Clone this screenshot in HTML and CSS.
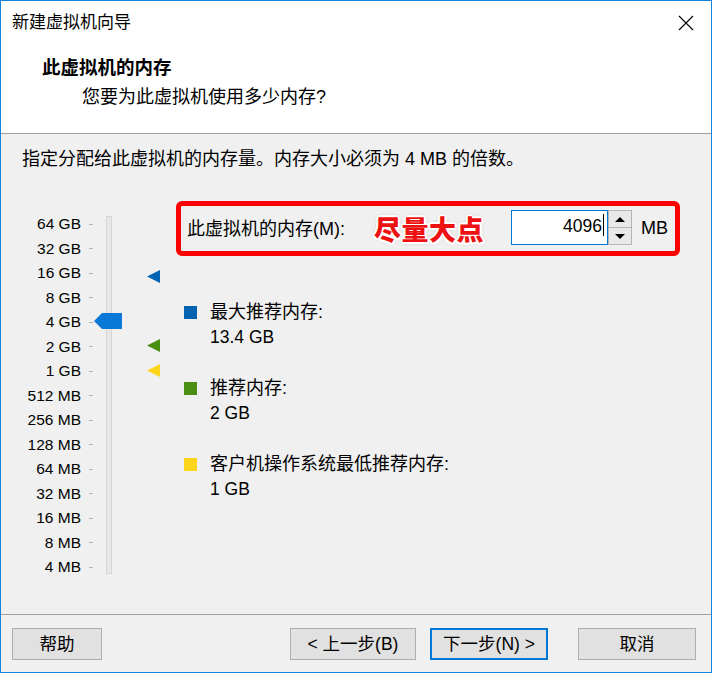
FILE: index.html
```html
<!DOCTYPE html>
<html lang="zh-CN">
<head>
    <meta charset="UTF-8">
    <title>新建虚拟机向导</title>
    <link rel="stylesheet" href="styles.css">
</head>
<body>
    <div class="window">
        <!-- Заголовок окна -->
        <div class="titlebar">
            <span class="title">新建虚拟机向导</span>
            <svg class="close" width="16" height="16" viewBox="0 0 16 16">
                <path d="M1 1 L15 15 M15 1 L1 15" stroke="#000" stroke-width="1.1" fill="none"/>
            </svg>
        </div>

        <div class="header">
            <div class="header-title">此虚拟机的内存</div>
            <div class="header-sub">您要为此虚拟机使用多少内存?</div>
        </div>

        <div class="content">
            <p class="intro">指定分配给此虚拟机的内存量。内存大小必须为 4 MB 的倍数。</p>

            <div class="main">
                <!-- Ползунок -->
                <div class="slider">
                    <div class="track"></div>
                    <span class="lbl">64 GB</span><span class="tick"></span>
                    <span class="lbl">32 GB</span><span class="tick"></span>
                    <span class="lbl">16 GB</span><span class="tick"></span>
                    <span class="lbl">8 GB</span><span class="tick"></span>
                    <span class="lbl">4 GB</span><span class="tick"></span>
                    <span class="lbl">2 GB</span><span class="tick"></span>
                    <span class="lbl">1 GB</span><span class="tick"></span>
                    <span class="lbl">512 MB</span><span class="tick"></span>
                    <span class="lbl">256 MB</span><span class="tick"></span>
                    <span class="lbl">128 MB</span><span class="tick"></span>
                    <span class="lbl">64 MB</span><span class="tick"></span>
                    <span class="lbl">32 MB</span><span class="tick"></span>
                    <span class="lbl">16 MB</span><span class="tick"></span>
                    <span class="lbl">8 MB</span><span class="tick"></span>
                    <span class="lbl">4 MB</span><span class="tick"></span>

                    <svg class="thumb" width="28" height="16" viewBox="0 0 28 16">
                        <path d="M0 8 L8 0 H28 V16 H8 Z" fill="#0a78d6"/>
                    </svg>
                    <svg class="marker marker-max" width="13" height="13" viewBox="0 0 13 13">
                        <path d="M0 6.5 L13 0 V13 Z" fill="#0063b1"/>
                    </svg>
                    <svg class="marker marker-rec" width="13" height="13" viewBox="0 0 13 13">
                        <path d="M0 6.5 L13 0 V13 Z" fill="#4a8f12"/>
                    </svg>
                    <svg class="marker marker-min" width="13" height="13" viewBox="0 0 13 13">
                        <path d="M0 6.5 L13 0 V13 Z" fill="#fcd419"/>
                    </svg>
                </div>

                <div class="panel">
                    <div class="mem-box">
                        <span class="mem-label">此虚拟机的内存(M):</span>
                        <span class="hint">尽量大点</span>
                        <div class="spin">
                            <div class="spin-input">4096<span class="caret"></span></div>
                            <div class="spin-btns">
                                <div class="spin-btn"><span class="arrow-up"></span></div>
                                <div class="spin-btn"><span class="arrow-down"></span></div>
                            </div>
                        </div>
                        <span class="unit">MB</span>
                    </div>

                    <div class="legend">
                        <div class="legend-item">
                            <div class="legend-name"><span class="swatch swatch-blue"></span>最大推荐内存:</div>
                            <div class="legend-value">13.4 GB</div>
                        </div>
                        <div class="legend-item">
                            <div class="legend-name"><span class="swatch swatch-green"></span>推荐内存:</div>
                            <div class="legend-value">2 GB</div>
                        </div>
                        <div class="legend-item">
                            <div class="legend-name"><span class="swatch swatch-yellow"></span>客户机操作系统最低推荐内存:</div>
                            <div class="legend-value">1 GB</div>
                        </div>
                    </div>
                </div>
            </div>
        </div>

        <div class="footer">
            <button class="btn btn-help">帮助</button>
            <button class="btn btn-back">&lt; 上一步(B)</button>
            <button class="btn btn-next">下一步(N) &gt;</button>
            <button class="btn btn-cancel">取消</button>
        </div>
    </div>
</body>
</html>
```

FILE: styles.css
```css
/* Окно мастера */
body {
    margin: 0;
    font-family: "Liberation Sans", "Noto Sans CJK SC", sans-serif;
    font-size: 18px;
    color: #000;
    background: #fff;
}

.window {
    width: 712px;
    height: 673px;
    box-sizing: border-box;
    border: 1px solid #1883d7;
    display: flex;
    flex-direction: column;
    background: #f0f0f0;
}

.titlebar {
    height: 43px;
    background: #fff;
    display: flex;
    align-items: center;
    justify-content: space-between;
    padding: 0 17px 0 11px;
}

.title {
    font-size: 17px;
    line-height: 24px;
    padding-top: 1px;
}

.close {
    margin-top: 1px;
}

.header {
    height: 89px;
    background: #fff;
    border-bottom: 1px solid #a0a0a0;
}

.header-title {
    font-weight: bold;
    font-size: 18.5px;
    line-height: 26px;
    margin: 11px 0 0 41px;
}

.header-sub {
    line-height: 26px;
    margin: 3px 0 0 81px;
}

.content {
    flex: 1;
}

.intro {
    margin: 13px 0 0 21px;
    line-height: 24px;
}

.main {
    display: flex;
    margin-top: 30px;
}

/* Ползунок */
.slider {
    position: relative;
    width: 175px;
    padding-top: 11px;
    display: grid;
    grid-template-columns: 80px 8px 4px 13px 6px;
    grid-template-rows: repeat(15, 24.5px);
}

.lbl {
    grid-column: 1;
    text-align: right;
    font-size: 15.5px;
    line-height: 24.5px;
}

.tick {
    grid-column: 3;
    align-self: center;
    height: 1px;
    background: #b4b4b4;
}

.track {
    grid-column: 5;
    grid-row: 1 / -1;
    margin: 4px 0 6px;
    box-sizing: border-box;
    background: #e7e7e7;
    border: 1px solid #d6d6d6;
}

.thumb {
    position: absolute;
    left: 93px;
    top: 112px;
}

.marker {
    position: absolute;
    left: 146px;
}

.marker-max { top: 69px; }
.marker-rec { top: 138px; }
.marker-min { top: 163px; }

/* Правая часть */
.panel {
    width: 504px;
}

.mem-box {
    height: 55px;
    box-sizing: border-box;
    border: 5px solid #ff0000;
    border-radius: 6px;
    display: flex;
    align-items: center;
    padding-left: 6px;
}

.mem-label {
    line-height: 24px;
}

.hint {
    margin-left: 29px;
    font-size: 27px;
    font-weight: 900;
    color: #ee1111;
    letter-spacing: 0.5px;
    text-shadow:
        2px 0 0 #fff, -2px 0 0 #fff, 0 2px 0 #fff, 0 -2px 0 #fff,
        1.5px 1.5px 0 #fff, -1.5px -1.5px 0 #fff, 1.5px -1.5px 0 #fff, -1.5px 1.5px 0 #fff,
        0 0 4px rgba(0, 0, 0, 0.35);
}

.spin {
    display: flex;
    margin-left: 27px;
    margin-top: -2px;
}

.spin-input {
    width: 97px;
    height: 35px;
    box-sizing: border-box;
    border: 1px solid #0078d7;
    background: #fff;
    text-align: right;
    font-size: 17.5px;
    line-height: 30px;
    padding-right: 3px;
}

.caret {
    display: inline-block;
    width: 1px;
    height: 22px;
    background: #000;
    vertical-align: -4px;
    margin-left: 1px;
}

.spin-btns {
    width: 24px;
    height: 35px;
    display: flex;
    flex-direction: column;
}

.spin-btn {
    flex: 1;
    box-sizing: border-box;
    border: 1px solid #b5b5b5;
    background: #e9e9e9;
    display: flex;
    align-items: center;
    justify-content: center;
}

.spin-btn + .spin-btn {
    border-top: none;
}

.arrow-up {
    border-left: 5px solid transparent;
    border-right: 5px solid transparent;
    border-bottom: 5px solid #000;
}

.arrow-down {
    border-left: 5px solid transparent;
    border-right: 5px solid transparent;
    border-top: 5px solid #000;
}

.unit {
    margin-left: 9px;
}

/* Легенда */
.legend {
    margin-top: 44px;
    padding-left: 8px;
    display: flex;
    flex-direction: column;
    gap: 26px;
}

.legend-name,
.legend-value {
    line-height: 25px;
}

.legend-name {
    display: flex;
    align-items: center;
}

.legend-value {
    font-size: 17.5px;
    padding-left: 26px;
}

.swatch {
    width: 13px;
    height: 13px;
    margin-right: 13px;
}

.swatch-blue { background: #0063b1; }
.swatch-green { background: #4a8f12; }
.swatch-yellow { background: #fcd419; }

/* Кнопки */
.footer {
    height: 58px;
    box-sizing: border-box;
    border-top: 1px solid #a0a0a0;
    padding: 13px 0 0 11px;
    display: flex;
    align-items: flex-start;
}

.btn {
    height: 32px;
    box-sizing: border-box;
    border: 1px solid #adadad;
    background: #e1e1e1;
    font-family: inherit;
    font-size: 17.5px;
    color: #000;
    padding: 0;
    line-height: 28px;
}

.btn-help { width: 90px; }
.btn-back { width: 126px; margin-left: 188px; }
.btn-next { width: 118px; margin-left: 14px; border: 2px solid #0078d7; }
.btn-cancel { width: 118px; margin-left: 30px; }
```
